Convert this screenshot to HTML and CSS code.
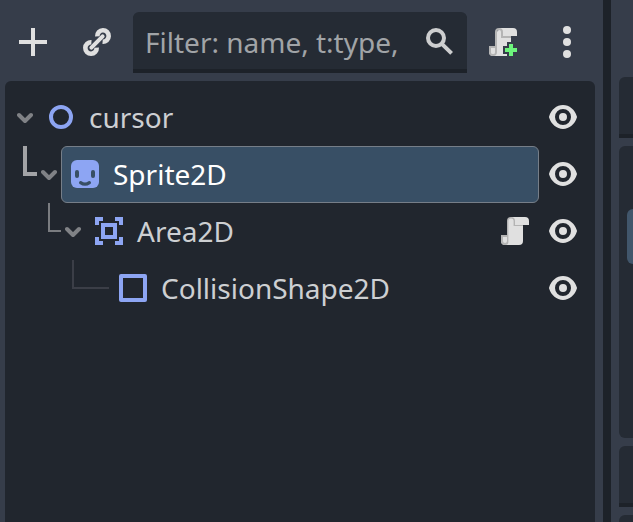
FILE: index.html
```html
<!DOCTYPE html>
<html lang="en">
<head>
    <meta charset="UTF-8">
    <meta name="viewport" content="width=device-width, initial-scale=1.0">
    <title>Scene</title>
    <link rel="stylesheet" href="styles.css">
</head>
<body>
    <!-- Shared icons -->
    <svg class="sprites" aria-hidden="true">
        <symbol id="eye" viewBox="0 0 16 16">
            <path fill="#e0e0e0" fill-rule="evenodd" d="M8 2C4.800 2 2.100 4.300 1.050 7.700a1 1 0 0 0 0 .6C2.100 11.700 4.800 14 8 14s5.900-2.300 6.950-5.700a1 1 0 0 0 0-.6C13.900 4.300 11.200 2 8 2zm0 2a4 4 0 0 1 0 8 4 4 0 0 1 0-8zm0 2a2 2 0 0 0 0 4 2 2 0 0 0 0-4z"/>
        </symbol>
        <symbol id="arrow" viewBox="0 0 16 16">
            <path fill="none" stroke="#808286" stroke-width="4" stroke-linecap="round" stroke-linejoin="round" d="M2 6l6 6 6-6"/>
        </symbol>
    </svg>
    <main class="editor">
        <section class="dock">
            <div class="toolbar">
                <button class="tool" type="button" aria-label="Add node">
                    <svg class="icon" viewBox="0 0 16 16"><path fill="#e0e0e0" d="M7 1v6H1v2h6v6h2V9h6V7H9V1z"/></svg>
                </button>
                <button class="tool" type="button" aria-label="Instance scene">
                    <svg class="icon" viewBox="0 0 16 16">
                        <g fill="none" stroke="#e0e0e0" stroke-width="2.300">
                            <path d="M8.150 5.200A2.850 2.850 0 1 1 10.800 7.850"/>
                            <path d="M7.850 10.800A2.850 2.850 0 1 1 5.200 8.150"/>
                            <path stroke-width="2" stroke-linecap="round" d="M5.200 10.800l5.600-5.600"/>
                        </g>
                    </svg>
                </button>
                <div class="filter">
                    <input type="text" aria-label="Filter nodes" placeholder="Filter: name, t:type,">
                    <svg class="icon" viewBox="0 0 16 16"><path fill="none" stroke="#cdcecf" stroke-width="2" d="M10.500 6a4 4 0 1 1-8 0 4 4 0 0 1 8 0zM9.300 8.800l5 4.900"/></svg>
                </div>
                <button class="tool" type="button" aria-label="Attach script">
                    <svg class="icon" viewBox="0 0 16 16">
                        <path fill="#e0e0e0" d="M6 1v1a1 1 0 0 0-1 1v10H4v-2H1v2a2 2 0 0 0 2 2h7v-1H8v-4h2V8h2V5h3V3a2 2 0 0 0-2-2z"/>
                        <path fill="#b4b4b4" d="M6 1a2 2 0 0 0-2 2v7H1v3a2 2 0 0 0 4 0V3a1 1 0 0 1 2 0v3h5V5H8V3a2 2 0 0 0-2-2zM2 11h2v2a1 1 0 0 1-2 0z"/>
                        <path fill="#e0e0e0" d="M2 11h2v2a1 1 0 0 1-2 0z"/>
                        <path fill="#6df47c" d="M11 9v2H9v2h2v2h2v-2h2v-2h-2V9z"/>
                    </svg>
                </button>
                <button class="tool" type="button" aria-label="More options">
                    <svg class="icon" viewBox="0 0 16 16"><g fill="#e0e0e0"><circle cx="8" cy="2" r="2"/><circle cx="8" cy="8" r="2"/><circle cx="8" cy="14" r="2"/></g></svg>
                </button>
            </div>
            <div class="tree">
                <div class="row">
                    <span class="indent"></span>
                    <button class="fold" type="button" aria-label="Collapse cursor"><svg class="arrow"><use href="#arrow"/></svg></button>
                    <div class="node">
                        <svg class="icon" viewBox="0 0 16 16"><circle cx="8" cy="8" r="5" fill="none" stroke="#8da5f3" stroke-width="2"/></svg>
                        <span class="name">cursor</span>
                    </div>
                    <button class="tool" type="button" aria-label="Toggle visibility"><svg class="icon"><use href="#eye"/></svg></button>
                </div>
                <div class="row">
                    <span class="indent level-1"><span class="branch strong"></span></span>
                    <button class="fold" type="button" aria-label="Collapse Sprite2D"><svg class="arrow"><use href="#arrow"/></svg></button>
                    <div class="node selected">
                        <svg class="icon" viewBox="0 0 16 16">
                            <rect x="1" y="1" width="14" height="14" rx="3" fill="#8da5f3"/>
                            <g fill="none" stroke="#384f65" stroke-width="2" stroke-linecap="round">
                                <path d="M4 7v2M12 7v2"/>
                                <path stroke-width="1.600" d="M5.800 12.300q2.200 1.600 4.400 0"/>
                            </g>
                        </svg>
                        <span class="name">Sprite2D</span>
                    </div>
                    <button class="tool" type="button" aria-label="Toggle visibility"><svg class="icon"><use href="#eye"/></svg></button>
                </div>
                <div class="row">
                    <span class="indent level-2"><span class="branch"></span></span>
                    <button class="fold" type="button" aria-label="Collapse Area2D"><svg class="arrow"><use href="#arrow"/></svg></button>
                    <div class="node">
                        <svg class="icon" viewBox="0 0 16 16">
                            <path fill="#8da5f3" fill-rule="evenodd" d="M1 1v4h2V3h2V1zM11 1v2h2v2h2V1zM1 11v4h4v-2H3v-2zM13 11v2h-2v2h4v-4zM4 4v8h8V4zm2 2h4v4H6z"/>
                        </svg>
                        <span class="name">Area2D</span>
                        <button class="tool" type="button" aria-label="Open script">
                            <svg class="icon" viewBox="0 0 16 16">
                                <path fill="#e0e0e0" d="M6 1v1a1 1 0 0 0-1 1v10H4v-2H1v2a2 2 0 0 0 2 2h7a2 2 0 0 0 2-2V5h3V3a2 2 0 0 0-2-2z"/>
                                <path fill="#b4b4b4" d="M6 1a2 2 0 0 0-2 2v7H1v3a2 2 0 0 0 4 0V3a1 1 0 0 1 2 0v2.500h5V5H8V3a2 2 0 0 0-2-2z"/>
                                <path fill="#e0e0e0" d="M2 11h2v2a1 1 0 0 1-2 0zM4.700 3a1.300 1.300 0 0 1 2.600 0v12H4.300a2 2 0 0 0 .4-1z"/>
                            </svg>
                        </button>
                    </div>
                    <button class="tool" type="button" aria-label="Toggle visibility"><svg class="icon"><use href="#eye"/></svg></button>
                </div>
                <div class="row">
                    <span class="indent level-3"><span class="branch faint"></span></span>
                    <div class="node">
                        <svg class="icon" viewBox="0 0 16 16"><rect x="2" y="2" width="12" height="12" fill="none" stroke="#8da5f3" stroke-width="2" stroke-linejoin="round"/></svg>
                        <span class="name">CollisionShape2D</span>
                    </div>
                    <button class="tool" type="button" aria-label="Toggle visibility"><svg class="icon"><use href="#eye"/></svg></button>
                </div>
            </div>
        </section>
        <!-- Edge of the neighbouring dock -->
        <aside class="side">
            <div class="field"></div>
            <div class="panel"><div class="marker"></div></div>
            <div class="field"></div>
            <div class="panel last"></div>
        </aside>
    </main>
</body>
</html>
```
FILE: styles.css
```css
* {
    box-sizing: border-box;
}
body {
    margin: 0;
    background-color: #363d4a;
    color: #cdcfd2;
    font-family: "Noto Sans", sans-serif;
    font-size: 28px;
    line-height: 40px;
}
button {
    padding: 0;
    border: none;
    background: none;
    cursor: pointer;
}
.sprites {
    display: none;
}
.editor {
    display: flex;
    height: 100vh;
    overflow: hidden;
}
.dock {
    flex: 1;
    min-width: 0;
    display: flex;
    flex-direction: column;
    gap: 9px;
    padding: 12px 8px 0 5px;
}
.icon {
    display: block;
    flex: none;
    width: 32px;
    height: 32px;
    overflow: visible;
}
.tool {
    flex: none;
}

/* Toolbar */
.toolbar {
    display: flex;
    align-items: center;
    gap: 20px;
    padding: 0 12px;
}
.toolbar .tool + .tool {
    margin-left: 12px;
}
.filter {
    flex: 1;
    min-width: 0;
    display: flex;
    align-items: center;
    gap: 8px;
    height: 60px;
    padding: 0 12px;
    background-color: #252b34;
    box-shadow: 0 1px #1d2229, inset 0 -3px #1d2229;
    border-radius: 6px 6px 0 0;
}
.filter input {
    flex: 1;
    min-width: 0;
    height: 40px;
    padding: 0;
    border: none;
    outline: none;
    background: none;
    color: #cdcfd2;
    font: inherit;
}
.filter input::placeholder {
    color: #a1a4a7;
    opacity: 1;
}

/* Scene tree */
.tree {
    flex: 1;
    display: flex;
    flex-direction: column;
    gap: 1px;
    padding: 8px 16px 0 0;
    background-color: #21262e;
    border-radius: 6px 6px 0 0;
}
.row {
    display: flex;
    align-items: center;
    height: 56px;
}
.row > .tool {
    margin-left: 8px;
}
.indent {
    flex: none;
    display: flex;
    justify-content: flex-end;
    align-self: stretch;
    width: 12px;
}
.level-1 {
    width: 36px;
    padding-right: 4px;
}
.level-2 {
    width: 60px;
    padding-right: 4px;
}
.level-3 {
    width: 104px;
}
.branch {
    width: 13px;
    height: 29px;
    border-left: 2px solid #7a7c80;
    border-bottom: 2px solid #7a7c80;
}
.branch.strong {
    width: 14px;
    height: 30px;
    border-width: 0 0 4px 4px;
    border-color: #a2a3a6;
}
.branch.faint {
    width: 37px;
    border-color: #3b3e47;
}
.fold {
    flex: none;
    margin-right: 4px;
}
.arrow {
    display: block;
    width: 16px;
    height: 16px;
}
.node {
    flex: 1;
    min-width: 0;
    display: flex;
    align-items: center;
    height: 57px;
    margin-bottom: -1px;
    padding: 0 7px 1px;
    border: 1px solid transparent;
    border-radius: 6px;
}
.node.selected {
    background-color: #384f65;
    border-color: #767e88;
    color: #fff;
}
.name {
    flex: 1;
    margin-left: 12px;
}

/* Next dock */
.side {
    flex: none;
    display: flex;
    flex-direction: column;
    gap: 8px;
    width: 30px;
    padding-top: 77px;
    border-left: 8px solid #1d2229;
    padding-left: 8px;
}
.field {
    flex: none;
    height: 61px;
    background-color: #252b34;
    border-bottom: 4px solid #1d2229;
    border-radius: 6px 0 0 0;
}
.panel {
    flex: none;
    height: 292px;
    padding: 63px 0 0 8px;
    background-color: #252b34;
    border-radius: 6px 0 0 6px;
}
.marker {
    height: 55px;
    background-color: #41566b;
    border-radius: 6px 0 0 6px;
}
.panel.last {
    flex: 1;
    height: auto;
    padding: 0;
    border-radius: 6px 0 0 0;
}
```
